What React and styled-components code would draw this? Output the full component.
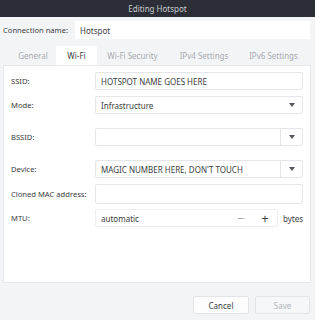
import React from 'react';
import styled, { createGlobalStyle } from 'styled-components';

const Global = createGlobalStyle`
  html, body { margin: 0; padding: 0; }
  body {
    width: 315px;
    height: 320px;
    overflow: hidden;
    background: #f3f4f6;
    font-family: "Noto Sans", "DejaVu Sans", sans-serif;
    font-size: 8px;
    color: #3a3d42;
    white-space: nowrap;
  }
`;

const Window = styled.div`
  width: 315px;
  height: 320px;
  display: flex;
  flex-direction: column;
  background: #f3f4f6;
`;

const TitleBar = styled.div`
  height: 17px;
  background: #2b2e36;
  color: #c9cbd0;
  display: flex;
  align-items: center;
  justify-content: center;
  font-size: 8px;
`;

const Body = styled.div`
  flex: 1;
  display: flex;
  flex-direction: column;
  padding: 3px 4px 0 3px;
`;

const NameRow = styled.div`
  display: flex;
  align-items: center;
  height: 20px;
`;

const NameLabel = styled.div`
  width: 71px;
  font-size: 7.6px;
`;

const Entry = styled.div`
  flex: 1;
  height: ${p => p.h || 18}px;
  box-sizing: border-box;
  background: #fff;
  border: 1px solid ${p => (p.flat ? '#f4f5f7' : '#e4e6ea')};
  border-radius: 2px;
  display: flex;
  align-items: center;
  padding-left: 5px;
  overflow: hidden;
`;

const Tabs = styled.div`
  display: flex;
  align-items: flex-end;
  height: 21px;
  margin-top: 4px;
  padding-left: 10px;
`;

const Tab = styled.div`
  width: ${p => p.w}px;
  margin-right: ${p => p.gap || 0}px;
  height: 19px;
  display: flex;
  align-items: center;
  justify-content: center;
  color: ${p => (p.active ? '#3a3d42' : '#a9abb0')};
  background: ${p => (p.active ? '#fff' : 'transparent')};
  border-radius: 2px 2px 0 0;
`;

const Panel = styled.div`
  height: 218px;
  box-sizing: border-box;
  background: #fff;
  border: 1px solid #e6e8eb;
  padding: 6px 7px 0 7px;
  display: flex;
  flex-direction: column;
`;

const Row = styled.div`
  display: flex;
  align-items: center;
  margin-top: ${p => p.top || 0}px;
`;

const Label = styled.div`
  width: 84px;
  flex-shrink: 0;
  font-size: 7.6px;
`;

const Combo = styled.div`
  flex: 1;
  height: 18px;
  box-sizing: border-box;
  background: #fff;
  border: 1px solid #e4e6ea;
  border-radius: 2px;
  display: flex;
  align-items: center;
`;

const ComboText = styled.div`
  flex: 1;
  padding-left: 5px;
`;

const Arrow = styled.div`
  width: 21px;
  align-self: stretch;
  display: flex;
  align-items: center;
  justify-content: center;
  border-left: 1px solid ${p => (p.split ? '#e4e6ea' : 'transparent')};
  &::after {
    content: '';
    border-left: 3.5px solid transparent;
    border-right: 3.5px solid transparent;
    border-top: 4px solid #55585e;
  }
`;

const SpinBox = styled.div`
  width: 184px;
  height: 18px;
  box-sizing: border-box;
  background: #fff;
  border: 1px solid #eceef1;
  border-radius: 2px;
  display: flex;
  align-items: center;
`;

const SpinBtn = styled.div`
  width: 24px;
  height: 100%;
  display: flex;
  align-items: center;
  justify-content: center;
  font-size: 13px;
  color: ${p => (p.dim ? '#a9abb0' : '#3a3d42')};
`;

const Unit = styled.div`
  margin-left: 5px;
`;

const Footer = styled.div`
  display: flex;
  justify-content: flex-end;
  gap: 6px;
  padding: 13px 1px 0 0;
`;

const Button = styled.div`
  width: ${p => p.w}px;
  height: 18px;
  box-sizing: border-box;
  background: ${p => (p.disabled ? '#f6f7f8' : '#fdfdfd')};
  border: 1px solid #e2e4e8;
  border-radius: 2px;
  display: flex;
  align-items: center;
  justify-content: center;
  color: ${p => (p.disabled ? '#b3b5ba' : '#3a3d42')};
`;

export default function App() {
  return (
    <>
      <Global />
      <Window>
        <TitleBar>Editing Hotspot</TitleBar>
        <Body>
          <NameRow>
            <NameLabel>Connection name:</NameLabel>
            <Entry h={20} flat>Hotspot</Entry>
          </NameRow>
          <Tabs>
            <Tab w={40} gap={3}>General</Tab>
            <Tab w={41} active>Wi-Fi</Tab>
            <Tab w={71}>Wi-Fi Security</Tab>
            <Tab w={72}>IPv4 Settings</Tab>
            <Tab w={67}>IPv6 Settings</Tab>
          </Tabs>
          <Panel>
            <Row>
              <Label>SSID:</Label>
              <Entry>HOTSPOT NAME GOES HERE</Entry>
            </Row>
            <Row top={6}>
              <Label>Mode:</Label>
              <Combo>
                <ComboText>Infrastructure</ComboText>
                <Arrow />
              </Combo>
            </Row>
            <Row top={14}>
              <Label>BSSID:</Label>
              <Combo>
                <ComboText />
                <Arrow split />
              </Combo>
            </Row>
            <Row top={14}>
              <Label>Device:</Label>
              <Combo>
                <ComboText>MAGIC NUMBER HERE, DON'T TOUCH</ComboText>
                <Arrow split />
              </Combo>
            </Row>
            <Row top={6}>
              <Label>Cloned MAC address:</Label>
              <Entry h={20} />
            </Row>
            <Row top={5}>
              <Label>MTU:</Label>
              <SpinBox>
                <ComboText>automatic</ComboText>
                <SpinBtn dim>−</SpinBtn>
                <SpinBtn>+</SpinBtn>
              </SpinBox>
              <Unit>bytes</Unit>
            </Row>
          </Panel>
          <Footer>
            <Button w={56}>Cancel</Button>
            <Button w={55} disabled>Save</Button>
          </Footer>
        </Body>
      </Window>
    </>
  );
}
